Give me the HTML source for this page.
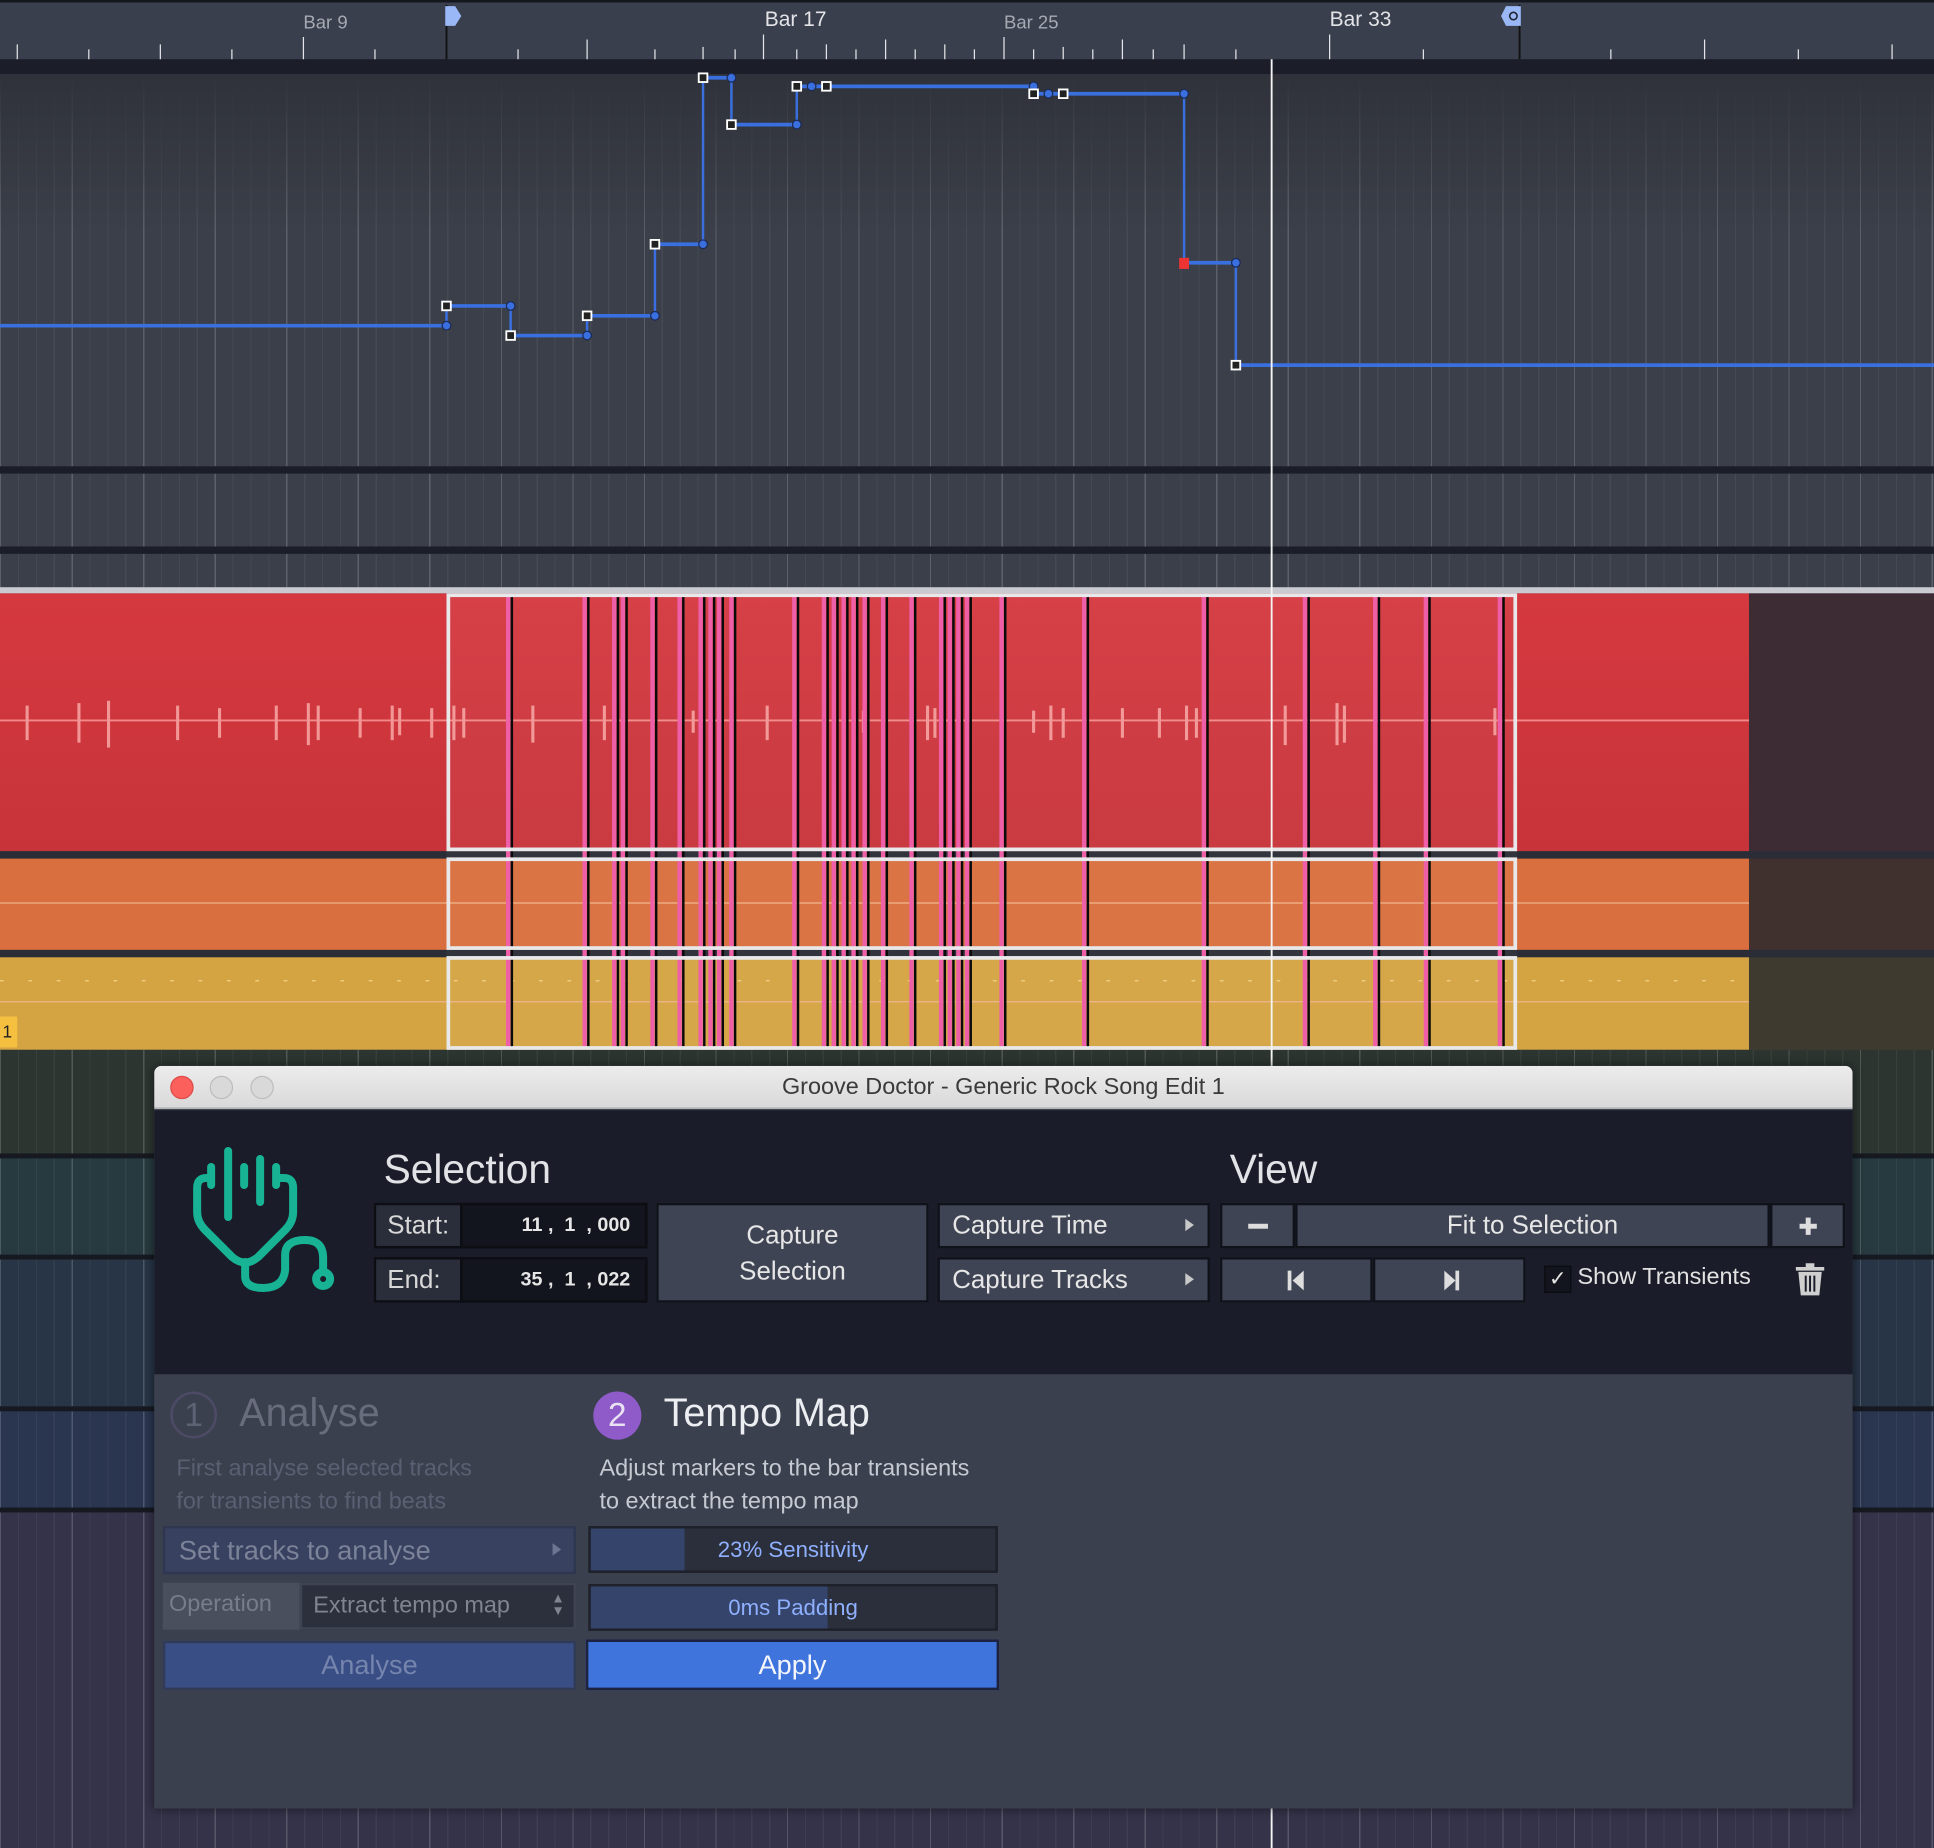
<!DOCTYPE html>
<html><head><meta charset="utf-8"><style>
*{margin:0;padding:0;box-sizing:border-box}
html,body{width:1934px;height:1848px;overflow:hidden;background:#2c2f3a}
#s{position:absolute;left:0;top:0;width:1568px;height:1498px;transform:scale(1.23342,1.23364);transform-origin:0 0;font-family:"Liberation Sans",sans-serif;overflow:hidden;background:#3a3e49}
.a{position:absolute}
.grid{background-image:repeating-linear-gradient(90deg,rgba(255,255,255,0.13) 0 1px,transparent 1px 58px),repeating-linear-gradient(90deg,rgba(255,255,255,0.05) 0 1px,transparent 1px 14.5px)}
.btn{position:absolute;background:#3f4454;border:2px solid #10121a;color:#e6e6e6;text-align:center}
.dk{position:absolute;background:#12151d;border:2px solid #0c0e14;color:#e6e6e6}
.tri{position:absolute;width:0;height:0;border-left:7px solid #c8c8c8;border-top:5px solid transparent;border-bottom:5px solid transparent}
</style></head><body><div id="s">
<!-- ruler -->
<div class="a" style="left:0;top:0;width:1568px;height:48px;background:#3a3f4d;border-top:2px solid #15171f"></div>
<div class="a" style="left:246px;top:10px;font-size:15px;color:#a6a9b2">Bar 9</div>
<div class="a" style="left:620px;top:6px;font-size:17px;color:#e4e4e8">Bar 17</div>
<div class="a" style="left:814px;top:10px;font-size:15px;color:#a6a9b2">Bar 25</div>
<div class="a" style="left:1078px;top:6px;font-size:17px;color:#e4e4e8">Bar 33</div>
<div class="a" style="left:0;top:48px;width:1568px;height:12px;background:#1b1e29"></div>
<div class="a grid" style="left:0;top:60px;width:1568px;height:318px;background-color:#3b3f49;background-image:linear-gradient(#2f323a,rgba(0,0,0,0) 40%),repeating-linear-gradient(90deg,rgba(255,255,255,0.12) 0 1px,transparent 1px 58px),repeating-linear-gradient(90deg,rgba(255,255,255,0.05) 0 1px,transparent 1px 14.5px)"></div>
<div class="a" style="left:0;top:378px;width:1568px;height:6px;background:#1b1e28"></div>
<div class="a grid" style="left:0;top:384px;width:1568px;height:59px;background-color:#3b3f49"></div>
<div class="a" style="left:0;top:443px;width:1568px;height:6px;background:#1b1e28"></div>
<div class="a grid" style="left:0;top:449px;width:1568px;height:28px;background-color:#3b3f49"></div>
<div class="a" style="left:0;top:476px;width:1568px;height:5px;background:#c9cbd0"></div>
<!-- clips -->
<div class="a" style="left:0;top:481px;width:1418px;height:209px;background:linear-gradient(#d5393f,#c7333a)"></div>
<div class="a" style="left:1418px;top:481px;width:150px;height:209px;background:#3d2c33"></div>
<div class="a" style="left:0;top:690px;width:1568px;height:6px;background:#2a2c36"></div>
<div class="a" style="left:0;top:696px;width:1418px;height:74px;background:#d96f3e"></div>
<div class="a" style="left:1418px;top:696px;width:150px;height:74px;background:#40302e"></div>
<div class="a" style="left:0;top:770px;width:1568px;height:6px;background:#2a2c36"></div>
<div class="a" style="left:0;top:776px;width:1418px;height:75px;background:#d4a442"></div>
<div class="a" style="left:1418px;top:776px;width:150px;height:75px;background:#3e3a30"></div>
<div class="a" style="left:0;top:824px;width:14px;height:25px;background:#f5c040;font-size:14px;color:#222;padding-left:2px;line-height:25px">1</div>
<!-- lower lanes -->
<div class="a grid" style="left:0;top:851px;width:1568px;height:84px;background-color:#2d3531"></div>
<div class="a grid" style="left:0;top:935px;width:1568px;height:82px;background-color:#273a3f;border-top:4px solid #161a20"></div>
<div class="a grid" style="left:0;top:1017px;width:1568px;height:123px;background-color:#273546;border-top:4px solid #161a20"></div>
<div class="a grid" style="left:0;top:1140px;width:1568px;height:82px;background-color:#2a3550;border-top:4px solid #161a20"></div>
<div class="a grid" style="left:0;top:1222px;width:1568px;height:276px;background-color:#343349;border-top:4px solid #161a20"></div>
<svg class="a" style="left:0;top:0" width="1568" height="1498" viewBox="0 0 1568 1498">
<g stroke="#e4e5e8" stroke-width="1">
<path d="M14 48V36M72 48V40M130 48V36M188 48V40M246 48V30M304 48V40M420 48V40M476 48V32M531 48V40M570 48V38M596 48V40M619 48V28M646 48V40M670 48V36M694 48V40M718 48V32M742 48V40M766 48V36M790 48V40M814 48V30M838 48V40M862 48V38M886 48V40M910 48V32M935 48V40M960 48V36M1002 48V40M1078 48V28M1154 48V40M1306 48V40M1382 48V32M1458 48V40M1534 48V36"/>
</g>
<path d="M362 4V48M1232 4V48" stroke="#111" stroke-width="1.5"/>
<path d="M361 5h8l5 8-5 8h-8z" fill="#9ab8f5"/>
<path d="M1221 5h12v16h-12l-4-8z" fill="#9ab8f5"/><circle cx="1227" cy="13" r="3" fill="none" stroke="#223" stroke-width="1.3"/>
<!-- tempo -->
<g stroke="#3a6fe0" fill="none">
<path stroke-width="3" d="M0 264H362M362 248H414M414 272H476M476 256H531M531 198H570M570 63H593M593 101H646M646 70H838M838 76H960M960 213H1002M1002 296H1568"/>
<path stroke-width="2" d="M362 264V248M414 248V272M476 272V256M531 256V198M570 198V63M593 63V101M646 101V70M960 76V213M1002 213V296"/>
</g>
<g fill="#3a6fe0" stroke="#1c2a55" stroke-width="1">
<circle cx="362" cy="264" r="3.5"/><circle cx="414" cy="248" r="3.5"/><circle cx="476" cy="272" r="3.5"/><circle cx="531" cy="256" r="3.5"/><circle cx="570" cy="198" r="3.5"/><circle cx="593" cy="63" r="3.5"/><circle cx="646" cy="101" r="3.5"/><circle cx="658" cy="70" r="3.5"/><circle cx="838" cy="70" r="3.5"/><circle cx="850" cy="76" r="3.5"/><circle cx="960" cy="76" r="3.5"/><circle cx="1002" cy="213" r="3.5"/>
</g>
<g fill="#222" stroke="#fff" stroke-width="1.5">
<rect x="358.5" y="244.5" width="7" height="7"/><rect x="410.5" y="268.5" width="7" height="7"/><rect x="472.5" y="252.5" width="7" height="7"/><rect x="527.5" y="194.5" width="7" height="7"/><rect x="566.5" y="59.5" width="7" height="7"/><rect x="589.5" y="97.5" width="7" height="7"/><rect x="642.5" y="66.5" width="7" height="7"/><rect x="666.5" y="66.5" width="7" height="7"/><rect x="834.5" y="72.5" width="7" height="7"/><rect x="858.5" y="72.5" width="7" height="7"/><rect x="998.5" y="292.5" width="7" height="7"/>
</g>
<rect x="956" y="209" width="8" height="9" fill="#ee3333"/>
<!-- waveforms -->
<path d="M0 584H1418" stroke="#f08a8a" stroke-width="1.5"/>
<g stroke="#f29696" stroke-width="2.5">
<path d="M22 572V600M64 570V602M88 568V606M144 572V600M178 574V598M224 572V600M250 570V604M258 572V600M292 574V598M318 572V600M324 574V596M350 574V598M368 572V600M376 574V598M432 572V602M490 572V600M562 576V594M622 572V600M700 576V594M752 572V600M758 574V598M838 576V594M852 572V600M862 574V598M910 574V598M940 574V598M962 572V600M970 574V598M1042 572V604M1084 570V604M1090 572V602M1212 574V596"/>
</g>
<path d="M0 732H1418M0 812H1418" stroke="#f0b28a" stroke-width="1"/>
<path d="M0 795H1418" stroke="#f2d28a" stroke-width="1" stroke-dasharray="3 20"/>
<!-- selection box -->
<rect x="362" y="481" width="868" height="370" fill="rgba(255,255,255,0.04)"/>
<g id="tr">
<path stroke="#ef5fa8" stroke-width="3.5" d="M412 483V850M474 483V850M498 483V850M505 483V850M529 483V850M551 483V850M568 483V850M576 483V850M583 483V850M593 483V850M644 483V850M668 483V850M676 483V850M684 483V850M692 483V850M701 483V850M716 483V850M739 483V850M763 483V850M770 483V850M777 483V850M784 483V850M812 483V850M879 483V850M976 483V850M1058 483V850M1115 483V850M1156 483V850M1216 483V850"/>
<path stroke="#0a0a0a" stroke-width="2" d="M415 483V850M477 483V850M501 483V850M508 483V850M532 483V850M554 483V850M571 483V850M579 483V850M586 483V850M596 483V850M647 483V850M671 483V850M679 483V850M687 483V850M695 483V850M704 483V850M719 483V850M742 483V850M766 483V850M773 483V850M780 483V850M787 483V850M815 483V850M882 483V850M979 483V850M1061 483V850M1118 483V850M1159 483V850M1219 483V850"/>
</g>
<g fill="none" stroke="#e8e8ea" stroke-width="3">
<rect x="363.5" y="482.5" width="865" height="206"/>
<rect x="363.5" y="696.5" width="865" height="72"/>
<rect x="363.5" y="776.5" width="865" height="73"/>
</g>
<path d="M1031 48V1498" stroke="#f4f4f4" stroke-width="1.5"/>
</svg>
<!-- dialog -->
<div class="a" style="left:125px;top:864px;width:1377px;height:602px;background:#3b404f;border-radius:6px 6px 0 0;box-shadow:0 0 8px rgba(0,0,0,.5);overflow:hidden">
 <div class="a" style="left:0;top:0;width:1377px;height:35px;background:linear-gradient(#ececec,#d9d9d9);border-bottom:1px solid #b5b5b5;text-align:center;font-size:19px;line-height:36px;color:#3a3a3a">Groove Doctor - Generic Rock Song Edit 1</div>
 <div class="a" style="left:13px;top:8px;width:19px;height:19px;border-radius:50%;background:#fc605c;border:1px solid #de4a45"></div>
 <div class="a" style="left:45px;top:8px;width:19px;height:19px;border-radius:50%;background:#d9d9d9;border:1px solid #bdbdbd"></div>
 <div class="a" style="left:78px;top:8px;width:19px;height:19px;border-radius:50%;background:#d9d9d9;border:1px solid #bdbdbd"></div>
 <div class="a" style="left:0;top:36px;width:1377px;height:214px;background:#1a1d29"></div>
</div>
<svg class="a" style="left:0;top:0" width="1568" height="1498" viewBox="0 0 1934 1848">
<g stroke="#17b394" stroke-width="8" stroke-linecap="round" fill="none">
<path d="M228 1151V1217M211 1167V1185M244 1167V1185M260 1159V1202M276 1167V1185"/>
<path d="M210 1178H206Q197 1178 197 1188V1212Q197 1222 205 1230L232 1257Q245 1268 258 1257L285 1230Q293 1222 293 1212V1188Q293 1178 284 1178H278"/>
<path d="M245 1262V1276Q245 1288 263 1288Q283 1288 285 1270V1255Q285 1240 305 1240Q323 1240 323 1258V1272"/>
<circle cx="323" cy="1279" r="7"/>
</g>
</svg>
<div class="a" style="left:311px;top:929px;font-size:33px;color:#e2e3e6">Selection</div>
<div class="a" style="left:997px;top:929px;font-size:33px;color:#e2e3e6">View</div>
<div class="dk" style="left:303px;top:975px;width:72px;height:37px;background:#2a2e3a;font-size:21px;line-height:33px;padding-left:9px;color:#d8d8d8">Start:</div>
<div class="dk" style="left:373px;top:975px;width:152px;height:37px;font-size:16px;font-weight:bold;line-height:33px;text-align:right;padding-right:12px;white-space:pre">11 ,  1  , 000</div>
<div class="dk" style="left:303px;top:1019px;width:72px;height:37px;background:#2a2e3a;font-size:21px;line-height:33px;padding-left:9px;color:#d8d8d8">End:</div>
<div class="dk" style="left:373px;top:1019px;width:152px;height:37px;font-size:16px;font-weight:bold;line-height:33px;text-align:right;padding-right:12px;white-space:pre">35 ,  1  , 022</div>
<div class="btn" style="left:532px;top:975px;width:221px;height:81px;font-size:21px;line-height:29px;padding-top:10px">Capture<br>Selection</div>
<div class="btn" style="left:760px;top:975px;width:221px;height:37px;font-size:21px;line-height:33px;text-align:left;padding-left:10px">Capture Time</div>
<div class="tri" style="left:961px;top:988px"></div>
<div class="btn" style="left:760px;top:1019px;width:221px;height:37px;font-size:21px;line-height:33px;text-align:left;padding-left:10px">Capture Tracks</div>
<div class="tri" style="left:961px;top:1032px"></div>
<div class="btn" style="left:989px;top:975px;width:61px;height:37px"><div class="a" style="left:21px;top:15px;width:16px;height:4px;background:#ddd"></div></div>
<div class="btn" style="left:1050px;top:975px;width:385px;height:37px;font-size:21px;line-height:33px">Fit to Selection</div>
<div class="btn" style="left:1435px;top:975px;width:61px;height:37px"><div class="a" style="left:22px;top:15px;width:14px;height:4px;background:#ddd"></div><div class="a" style="left:27px;top:10px;width:4px;height:14px;background:#ddd"></div></div>
<div class="btn" style="left:989px;top:1019px;width:124px;height:37px"><div class="a" style="left:53px;top:9px;width:3px;height:16px;background:#ddd"></div><div class="a" style="left:57px;top:9px;width:0;height:0;border-right:9px solid #ddd;border-top:8px solid transparent;border-bottom:8px solid transparent"></div></div>
<div class="btn" style="left:1113px;top:1019px;width:124px;height:37px"><div class="a" style="left:56px;top:9px;width:0;height:0;border-left:9px solid #ddd;border-top:8px solid transparent;border-bottom:8px solid transparent"></div><div class="a" style="left:65px;top:9px;width:3px;height:16px;background:#ddd"></div></div>
<div class="a" style="left:1252px;top:1026px;width:22px;height:22px;background:#12151d;border:1px solid #0a0c10;color:#e6e6e6;font-size:17px;text-align:center;line-height:20px">✓</div>
<div class="a" style="left:1279px;top:1025px;font-size:19px;color:#e2e2e2">Show Transients</div>
<svg class="a" style="left:1455px;top:1023px" width="25" height="28" viewBox="0 0 25 28"><path d="M9 1h7v3h8v3H1V4h8z" fill="#cfcfcf"/><path d="M3 8h19l-2 19H5z" fill="#cfcfcf"/><path d="M9 11v13M12.5 11v13M16 11v13" stroke="#1a1d29" stroke-width="1.6"/></svg>
<!-- bottom -->
<div class="a" style="left:138px;top:1128px;width:38px;height:38px;border-radius:50%;border:2px solid #4d4a66;color:#5d6275;font-size:27px;text-align:center;line-height:34px">1</div>
<div class="a" style="left:194px;top:1127px;font-size:32px;color:#686c7d">Analyse</div>
<div class="a" style="left:143px;top:1177px;font-size:19px;line-height:27px;color:#5a5f72">First analyse selected tracks<br>for transients to find beats</div>
<div class="a" style="left:132px;top:1237px;width:335px;height:39px;background:#384260;border:2px solid #2f3750;font-size:22px;line-height:35px;padding-left:11px;color:#7c8399">Set tracks to analyse</div>
<div class="tri" style="left:448px;top:1251px;border-left-color:#6d7590"></div>
<div class="a" style="left:132px;top:1283px;width:112px;height:38px;background:#4a4f5d;font-size:19px;line-height:36px;padding-left:5px;color:#797d8a">Operation</div>
<div class="a" style="left:243px;top:1283px;width:224px;height:38px;background:#2c303d;border:2px solid #3f4452;font-size:19px;line-height:34px;padding-left:9px;color:#80848f">Extract tempo map</div>
<div class="a" style="left:447px;top:1291px;font-size:11px;line-height:10px;color:#80848f">▲<br>▼</div>
<div class="a" style="left:132px;top:1330px;width:335px;height:40px;background:#3a4e86;border:2px solid #323b55;font-size:22px;line-height:36px;text-align:center;color:#7585ad">Analyse</div>
<div class="a" style="left:481px;top:1128px;width:39px;height:39px;border-radius:50%;background:#8e5bc9;color:#e8e2f2;font-size:27px;text-align:center;line-height:39px">2</div>
<div class="a" style="left:538px;top:1127px;font-size:32px;color:#eceef2">Tempo Map</div>
<div class="a" style="left:486px;top:1177px;font-size:19px;line-height:27px;color:#c6c9d1">Adjust markers to the bar transients<br>to extract the tempo map</div>
<div class="a" style="left:477px;top:1237px;width:332px;height:38px;background:#2b2f3b;border:2px solid #1e212a"><div class="a" style="left:0;top:0;width:76px;height:34px;background:#34446a"></div><div class="a" style="left:0;top:0;width:328px;text-align:center;font-size:18px;line-height:34px;color:#8fb0ff">23% Sensitivity</div></div>
<div class="a" style="left:477px;top:1284px;width:332px;height:38px;background:#2b2f3b;border:2px solid #1e212a"><div class="a" style="left:0;top:0;width:192px;height:34px;background:#34446a"></div><div class="a" style="left:0;top:0;width:328px;text-align:center;font-size:18px;line-height:34px;color:#8fb0ff">0ms Padding</div></div>
<div class="a" style="left:475px;top:1329px;width:335px;height:41px;background:#3e74dc;border:2px solid #1c2240;font-size:22px;line-height:37px;text-align:center;color:#f4f6fb">Apply</div>
</div></body></html>
